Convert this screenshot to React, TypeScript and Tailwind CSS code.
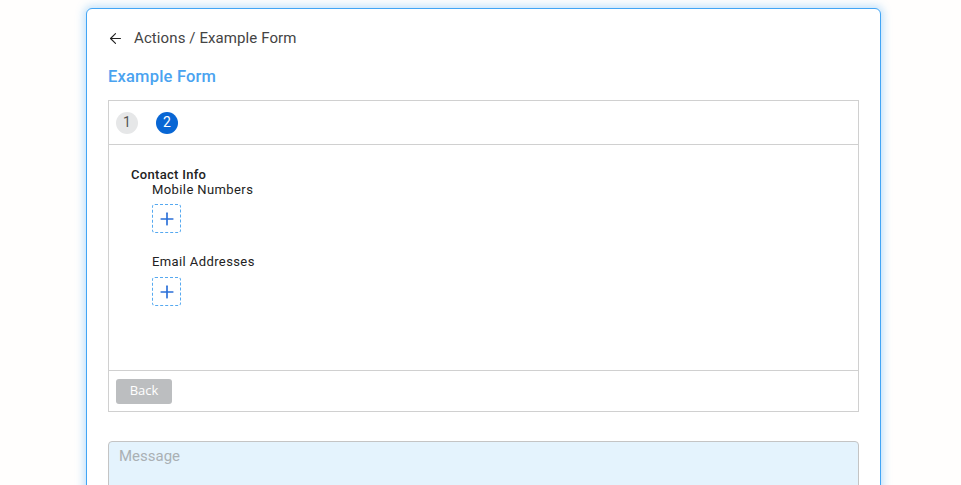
import React from 'react';
import { ArrowLeft, Plus } from 'lucide-react';

const AddButton: React.FC = () => (
  <button className="flex h-[29px] w-[29px] items-center justify-center rounded-[3px] border border-dashed border-[#56a9f0] text-[#2a6fd8]">
    <Plus size={20} strokeWidth={2} />
  </button>
);

export default function App() {
  return (
    <div className="h-[485px] overflow-hidden bg-[#fffefd] pt-[8px] font-['Roboto',sans-serif]">
      <div className="ml-[86px] w-[795px] h-[520px] rounded-[6px] border border-[#42a5f5] bg-white px-[21px] shadow-[0_0_8px_2px_rgba(66,165,245,0.35)]">
        <div className="flex h-[58px] items-center text-[#444]">
          <ArrowLeft size={17} strokeWidth={1.6} className="text-[#222] -ml-[1px]" />
          <span className="ml-[10px] text-[15px] tracking-[0.1px]">Actions / Example Form</span>
        </div>
        <h1 className="text-[16.5px] font-medium leading-[20px] tracking-[0.2px] text-[#4aa3f0]">Example Form</h1>

        <div className="mt-[13px] border border-[#d0d0d0]">
          <div className="flex h-[44px] items-center gap-[18px] border-b border-[#d0d0d0] pl-[7px]">
            <span className="flex h-[22px] w-[22px] items-center justify-center rounded-full bg-[#e6e7e8] text-[14px] text-[#555]">1</span>
            <span className="flex h-[22px] w-[22px] items-center justify-center rounded-full bg-[#0866d4] text-[14px] text-white">2</span>
          </div>

          <div className="h-[225px] pl-[22px] pt-[22px]">
            <div className="text-[13px] font-medium leading-[15px] tracking-[0.3px] text-[#222]">Contact Info</div>
            <div className="pl-[21px]">
              <div className="text-[13px] leading-[16px] tracking-[0.4px] text-[#222]">Mobile Numbers</div>
              <div className="mt-[6px]">
                <AddButton />
              </div>
              <div className="mt-[21px] text-[13px] leading-[16px] tracking-[0.4px] text-[#222]">Email Addresses</div>
              <div className="mt-[7px]">
                <AddButton />
              </div>
            </div>
          </div>

          <div className="flex h-[41px] items-center border-t border-[#d0d0d0] pl-[7px]">
            <button className="h-[25px] w-[56px] rounded-[3px] bg-[#bcbec0] font-['Open_Sans',sans-serif] text-[13px] text-white">Back</button>
          </div>
        </div>

        <div className="mt-[29px] h-[80px] rounded-t-[4px] border border-[#c4c4c4] bg-[#e4f3fd] px-[10px] pt-[3px] text-[15px] text-[#aab0b4]">
          Message
        </div>
      </div>
    </div>
  );
}
